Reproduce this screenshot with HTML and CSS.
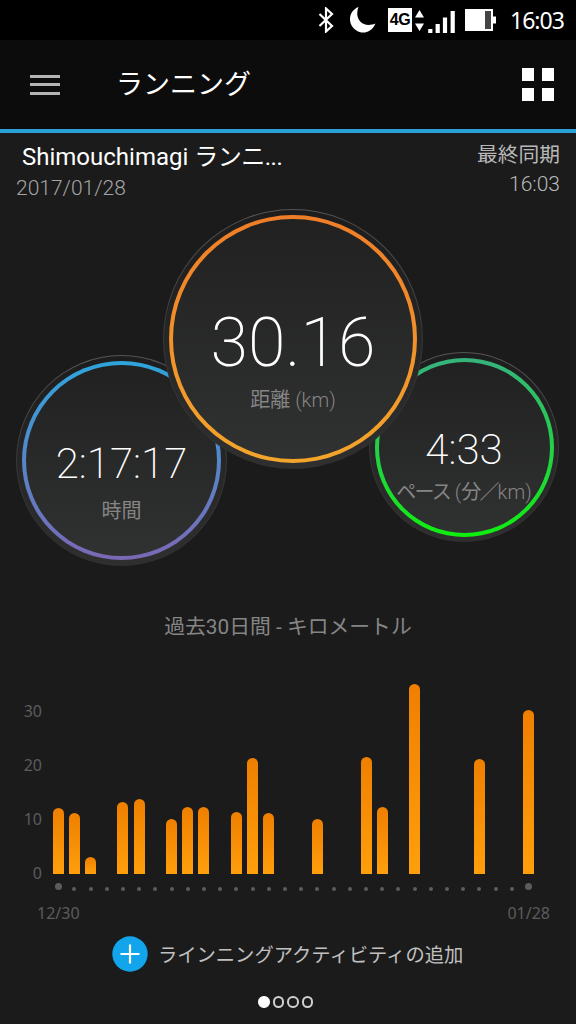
FILE: index.html
```html
<!DOCTYPE html>
<html lang="ja">
<head>
<meta charset="UTF-8">
<title>ランニング</title>
<link rel="stylesheet" href="styles.css">
</head>
<body>
<div class="status-bar">
    <svg class="icon-bluetooth" width="16" height="26" viewBox="0 0 16 26"><path d="M1.5 7L14 19L8 24.500V1.500L14 7L1.500 19" fill="none" stroke="#fff" stroke-width="2.200"/></svg>
    <svg class="icon-moon" width="26" height="26" viewBox="0 0 26 26"><path d="M8.5 0C-2 4 -3 18 6.500 23.500C13 28 22 25 25.500 16.500C12 22 4 11 8.500 0Z" fill="#fff"/></svg>
    <span class="badge-4g">4G</span>
    <svg class="icon-arrows" width="9" height="21" viewBox="0 0 9 21"><path d="M0 7.500L4.500 0L9 7.500ZM0 13.500L4.500 21L9 13.500Z" fill="#fff"/></svg>
    <svg class="icon-signal" width="27" height="23" viewBox="0 0 27 23"><path d="M2.300 19V23M9.700 14V23M17 7.500V23M24.700 1V23" stroke="#fff" stroke-width="4.200"/></svg>
    <svg class="icon-battery" width="31" height="22" viewBox="0 0 31 22"><path d="M0 0H28V7.500H31V14.500H28V22H0Z" fill="#fff"/><path d="M20 2H26V20H20Z" fill="#444"/></svg>
    <span class="clock">16:03</span>
</div>

<div class="header">
    <div class="menu"><i></i><i></i><i></i></div>
    <h1>ランニング</h1>
    <div class="grid-btn"><i></i><i></i><i></i><i></i></div>
</div>

<div class="summary">
    <div class="activity">
        <div class="name">Shimouchimagi <span>ランニ...</span></div>
        <div class="date">2017/01/28</div>
    </div>
    <div class="sync">
        <div class="sync-label">最終同期</div>
        <div class="sync-time">16:03</div>
    </div>
</div>

<div class="dials">
    <div class="dial time">
        <div class="ring">
            <div class="value">2:17:17</div>
            <div class="label"><span>時間</span></div>
        </div>
    </div>
    <div class="dial distance">
        <div class="ring">
            <div class="value">30.16</div>
            <div class="label"><span>距離</span> (km)</div>
        </div>
    </div>
    <div class="dial pace">
        <div class="ring">
            <div class="value">4:33</div>
            <div class="label"><span>ペース</span> (<span>分／</span>km)</div>
        </div>
    </div>
</div>

<h2 class="chart-title">過去30日間 - キロメートル</h2>

<div class="chart">
    <div class="y-axis">
        <span>30</span>
        <span>20</span>
        <span>10</span>
        <span>0</span>
    </div>
    <div class="plot">
        <div class="day end"><b style="height:66px"></b><i></i></div>
        <div class="day"><b style="height:61px"></b><i></i></div>
        <div class="day"><b style="height:17px"></b><i></i></div>
        <div class="day"><i></i></div>
        <div class="day"><b style="height:71.5px"></b><i></i></div>
        <div class="day"><b style="height:74.5px"></b><i></i></div>
        <div class="day"><i></i></div>
        <div class="day"><b style="height:55px"></b><i></i></div>
        <div class="day"><b style="height:66.5px"></b><i></i></div>
        <div class="day"><b style="height:66.5px"></b><i></i></div>
        <div class="day"><i></i></div>
        <div class="day"><b style="height:62px"></b><i></i></div>
        <div class="day"><b style="height:115.5px"></b><i></i></div>
        <div class="day"><b style="height:61px"></b><i></i></div>
        <div class="day"><i></i></div>
        <div class="day"><i></i></div>
        <div class="day"><b style="height:55px"></b><i></i></div>
        <div class="day"><i></i></div>
        <div class="day"><i></i></div>
        <div class="day"><b style="height:117px"></b><i></i></div>
        <div class="day"><b style="height:67px"></b><i></i></div>
        <div class="day"><i></i></div>
        <div class="day"><b style="height:190px"></b><i></i></div>
        <div class="day"><i></i></div>
        <div class="day"><i></i></div>
        <div class="day"><i></i></div>
        <div class="day"><b style="height:115px"></b><i></i></div>
        <div class="day"><i></i></div>
        <div class="day"><i></i></div>
        <div class="day end"><b style="height:164px"></b><i></i></div>
    </div>
</div>
<div class="x-axis">
    <span>12/30</span>
    <span>01/28</span>
</div>

<div class="add">
    <svg width="36" height="36" viewBox="0 0 36 36"><circle cx="18" cy="18" r="17.700" fill="#12a5ec"/><path d="M8.500 18H27.500M18 8.500V27.500" stroke="#fff" stroke-width="2.200"/></svg>
    <span>ラインニングアクティビティの追加</span>
</div>

<div class="pager"><i class="on"></i><i></i><i></i><i></i></div>
</body>
</html>
```
FILE: styles.css
```css
* {
    box-sizing: border-box;
}
body {
    margin: 0;
    width: 576px;
    height: 1024px;
    overflow: hidden;
    background: #1b1b1b;
    color: #fff;
    font-family: Roboto, "Noto Sans CJK JP", sans-serif;
}

/* status bar */
.status-bar {
    height: 40px;
    background: #000;
    display: flex;
    align-items: center;
    padding-left: 318px;
}
.icon-moon {
    margin-left: 16px;
}
.badge-4g {
    width: 24px;
    height: 24px;
    margin-left: 12px;
    background: #fff;
    color: #000;
    font: bold 16px/24px "Liberation Sans", sans-serif;
    text-align: center;
    letter-spacing: -0.5px;
}
.icon-arrows {
    margin-left: 3px;
}
.icon-signal {
    margin: 3px 0 0 4px;
}
.icon-battery {
    margin-left: 10px;
}
.clock {
    margin-left: 14px;
    font: 23px/40px "Noto Sans", sans-serif;
    letter-spacing: -1px;
    white-space: nowrap;
}

/* header */
.header {
    height: 93px;
    background: #0c0c0c;
    border-bottom: 4px solid #2b9fd8;
    display: flex;
    align-items: center;
    padding: 0 22px 0 30px;
}
.menu {
    width: 30px;
    display: flex;
    flex-direction: column;
    gap: 5.5px;
}
.menu i {
    height: 3px;
    background: #b4b4b4;
}
h1 {
    margin: 0 auto 0 56px;
    font-size: 27px;
    font-weight: 400;
    line-height: 40px;
}
.grid-btn {
    display: grid;
    grid-template-columns: 12.5px 12.5px;
    grid-auto-rows: 12.5px;
    gap: 7.5px;
}
.grid-btn i {
    background: #fff;
}

/* activity name and last sync */
.summary {
    height: 76px;
    display: flex;
    justify-content: space-between;
    padding: 8px 16px 0;
}
.name {
    padding-left: 6px;
    font-size: 24px;
    line-height: 32px;
}
.name span {
    letter-spacing: -0.5px;
}
.date {
    font-size: 21px;
    font-weight: 300;
    line-height: 30px;
    color: #a5a5a5;
}
.sync {
    text-align: right;
    color: #b8b8b8;
}
.sync-label {
    font-size: 20.75px;
    line-height: 29px;
}
.sync-time {
    font-size: 21px;
    font-weight: 300;
    line-height: 28px;
}

/* dials, the distance dial lies over the two others */
.dials {
    height: 387px;
    display: flex;
    align-items: flex-start;
    padding-left: 16px;
}
.dial {
    flex: none;
    border: 1.5px solid transparent;
    border-radius: 50%;
    background: linear-gradient(#1d1d1d, #2f2f2f) padding-box, linear-gradient(#555, #383838 50%, #2f2f2f) border-box;
}
.ring {
    height: 100%;
    border: 4px solid transparent;
    border-radius: 50%;
    text-align: center;
    white-space: nowrap;
}
.value {
    font-weight: 200;
}
.label {
    font-size: 20px;
    font-weight: 300;
    line-height: 30px;
    color: #858585;
}
.label span {
    font-weight: 400;
}
.time {
    width: 211px;
    height: 211px;
    margin-top: 146px;
    padding: 5px;
}
.time .ring {
    padding-top: 74px;
    background: linear-gradient(#212121, #303131) padding-box, linear-gradient(#2ea5dc, #7b68b5) border-box;
}
.time .value {
    font-size: 42px;
    line-height: 50px;
}
.time .label {
    margin-top: 7px;
}
.distance {
    width: 260px;
    height: 260px;
    margin-left: -64px;
    padding: 5px;
    z-index: 1;
}
.distance .ring {
    padding-top: 84px;
    background: linear-gradient(#212121, #303131) padding-box, linear-gradient(#ef7d28, #f3a52b) border-box;
}
.distance .value {
    font-size: 68px;
    line-height: 80px;
}
.distance .label {
    margin-top: 2px;
}
.pace {
    width: 190px;
    height: 190px;
    margin: 143px 0 0 -54px;
    padding: 4.5px;
}
.pace .ring {
    padding-top: 63px;
    background: linear-gradient(#212121, #303131) padding-box, linear-gradient(#36b37c, #10ee10) border-box;
}
.pace .value {
    font-size: 42px;
    line-height: 50px;
}
.pace .label {
    margin-top: 2px;
}
.pace .label span {
    letter-spacing: -1.8px;
}

/* chart */
.chart-title {
    margin: 16px 0 0;
    font-size: 20.8px;
    font-weight: 400;
    line-height: 30px;
    text-align: center;
    color: #858585;
}
.chart {
    height: 254px;
    display: flex;
}
.y-axis {
    width: 42px;
    margin-right: 8px;
    padding-top: 41.5px;
    display: flex;
    flex-direction: column;
    text-align: right;
    font: 16px/54.3px "Noto Sans", sans-serif;
    color: #5c5c5c;
}
.plot {
    width: 486.2px;
    height: 250px;
    display: grid;
    grid-template-columns: repeat(30, 1fr);
}
.day {
    display: flex;
    flex-direction: column;
    align-items: center;
    justify-content: flex-end;
}
.day b {
    width: 11px;
    border-radius: 5.5px 5.5px 0 0;
    background: linear-gradient(#ef7f00, #ff9f0c);
}
.day i {
    width: 4px;
    height: 4px;
    margin: 13px 0 1.5px;
    border-radius: 50%;
    background: #5c5c5c;
}
.day.end i {
    width: 7px;
    height: 7px;
    margin: 9.5px 0 2px;
}
.x-axis {
    display: flex;
    justify-content: space-between;
    padding: 5px 26px 0 37px;
    font: 16px/24px "Noto Sans", sans-serif;
    color: #5c5c5c;
}

/* add activity */
.add {
    height: 36px;
    margin-top: 11px;
    display: flex;
    align-items: center;
    padding-left: 112px;
}
.add span {
    margin-left: 10px;
    font-size: 19.3px;
    color: #c0c0c0;
}
.pager {
    display: flex;
    gap: 3px;
    padding-left: 258px;
    margin-top: 24px;
}
.pager i {
    width: 11.5px;
    height: 11.5px;
    border: 2px solid #d0d0d0;
    border-radius: 50%;
}
.pager .on {
    background: #fff;
    border-color: #fff;
}
```
